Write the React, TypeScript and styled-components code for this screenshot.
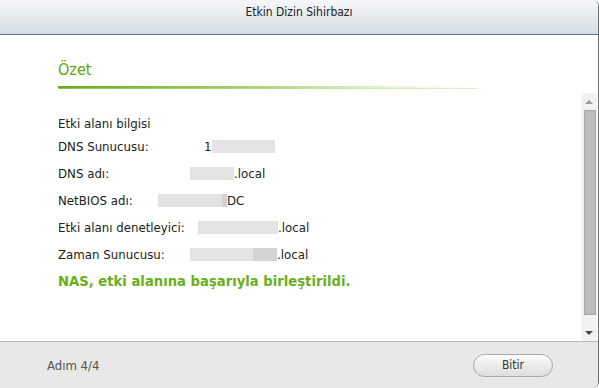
import styled, { createGlobalStyle } from 'styled-components';

const GlobalStyle = createGlobalStyle`
  html, body {
    margin: 0;
    padding: 0;
    background: #ffffff;
  }
  body {
    font-family: 'DejaVu Sans', sans-serif;
  }
`;

const Window = styled.div`
  width: 598px;
  height: 388px;
  display: flex;
  flex-direction: column;
  border-right: 1px solid #6e6e6e;
  border-radius: 0 6px 6px 0;
  overflow: hidden;
  background: #ffffff;
`;

const TitleBar = styled.div`
  height: 35px;
  flex: none;
  box-sizing: border-box;
  padding-top: 5px;
  text-align: center;
  font-family: 'DejaVu Sans Condensed', 'DejaVu Sans', sans-serif;
  font-size: 12px;
  color: #222;
  background: linear-gradient(#f6f7f9, #d6dde4);
  border-bottom: 1px solid #6b7075;
`;

const Body = styled.div`
  flex: 1;
  display: flex;
  min-height: 0;
`;

const Content = styled.div`
  flex: 1;
  padding: 25px 0 0 58px;
`;

const Heading = styled.div`
  font-family: 'DejaVu Sans Condensed', 'DejaVu Sans', sans-serif;
  font-size: 16px;
  color: #5ea512;
  line-height: 20px;
`;

const HeadingLine = styled.div`
  width: 420px;
  height: 2px;
  margin-top: 6px;
  background: linear-gradient(90deg, #66ad17 0%, #9ccc60 40%, rgba(220, 238, 198, 0.6) 80%, rgba(255, 255, 255, 0) 100%);
  border-bottom: 1px solid rgba(190, 224, 150, 0.5);
`;

const Info = styled.div`
  margin-top: 26px;
  font-size: 11.8px;
  color: #222;
`;

const Caption = styled.div`
  line-height: 18px;
`;

const Row = styled.div<{ $col: number }>`
  display: grid;
  grid-template-columns: ${p => p.$col}px auto;
  align-items: center;
  height: 27px;
`;

const Value = styled.div`
  display: flex;
  align-items: center;
`;

const Redact = styled.span<{ $w: number; $tone?: 'light' | 'dark' }>`
  display: inline-block;
  width: ${p => p.$w}px;
  height: 13px;
  background: ${p => (p.$tone === 'dark' ? '#d3d3d3' : '#e3e3e3')};
`;

const Plain = styled.span<{ $gap?: number }>`
  margin-right: ${p => p.$gap ?? 0}px;
`;

const Success = styled.div`
  margin-top: 6px;
  font-size: 13.2px;
  line-height: 15px;
  font-weight: bold;
  color: #68b01a;
`;

const Scrollbar = styled.div`
  width: 16px;
  margin: 58px 1px 0 0;
  background: #f2f2f2;
  display: flex;
  flex-direction: column;
  align-items: center;
`;

const Arrow = styled.div<{ $dir: 'up' | 'down' }>`
  height: 17px;
  display: flex;
  align-items: center;
  justify-content: center;
  &::before {
    content: '';
    border-left: 4px solid transparent;
    border-right: 4px solid transparent;
    ${p =>
      p.$dir === 'up'
        ? 'border-bottom: 4px solid #9a9a9a;'
        : 'border-top: 4px solid #444;'}
  }
`;

const Thumb = styled.div`
  width: 12px;
  height: 205px;
  margin-left: 2px;
  background: #bdbdbd;
  border: 1px solid #a9a9a9;
  box-sizing: border-box;
`;

const Filler = styled.div`
  flex: 1;
`;

const Footer = styled.div`
  height: 47px;
  flex: none;
  box-sizing: border-box;
  border-top: 1px solid #b9b9b9;
  background: #e8e8e8;
  display: flex;
  align-items: center;
  justify-content: space-between;
  padding: 0 45px 0 47px;
`;

const Step = styled.div`
  font-family: 'DejaVu Sans Condensed', 'DejaVu Sans', sans-serif;
  font-size: 13px;
  color: #555;
`;

const Button = styled.button`
  width: 80px;
  height: 23px;
  border-radius: 12px;
  border: 1px solid #a8a8a8;
  background: linear-gradient(#fbfbfb, #dedede);
  font-family: 'DejaVu Sans Condensed', 'DejaVu Sans', sans-serif;
  font-size: 12px;
  color: #333;
  padding: 0;
`;

export default function App() {
  return (
    <>
      <GlobalStyle />
      <Window>
        <TitleBar>Etkin Dizin Sihirbazı</TitleBar>
        <Body>
          <Content>
            <Heading>Özet</Heading>
            <HeadingLine />
            <Info>
              <Caption>Etki alanı bilgisi</Caption>
              <Row $col={146}>
                <span>DNS Sunucusu:</span>
                <Value>
                  <Plain>1</Plain>
                  <Redact $w={63} />
                </Value>
              </Row>
              <Row $col={132}>
                <span>DNS adı:</span>
                <Value>
                  <Redact $w={44} />
                  <Plain>.local</Plain>
                </Value>
              </Row>
              <Row $col={100}>
                <span>NetBIOS adı:</span>
                <Value>
                  <Redact $w={64} />
                  <Redact $w={5} $tone="dark" />
                  <Plain>DC</Plain>
                </Value>
              </Row>
              <Row $col={140}>
                <span>Etki alanı denetleyici:</span>
                <Value>
                  <Redact $w={80} />
                  <Plain>.local</Plain>
                </Value>
              </Row>
              <Row $col={132}>
                <span>Zaman Sunucusu:</span>
                <Value>
                  <Redact $w={63} />
                  <Redact $w={24} $tone="dark" />
                  <Plain>.local</Plain>
                </Value>
              </Row>
            </Info>
            <Success>NAS, etki alanına başarıyla birleştirildi.</Success>
          </Content>
          <Scrollbar>
            <Arrow $dir="up" />
            <Thumb />
            <Filler />
            <Arrow $dir="down" />
          </Scrollbar>
        </Body>
        <Footer>
          <Step>Adım 4/4</Step>
          <Button>Bitir</Button>
        </Footer>
      </Window>
    </>
  );
}
